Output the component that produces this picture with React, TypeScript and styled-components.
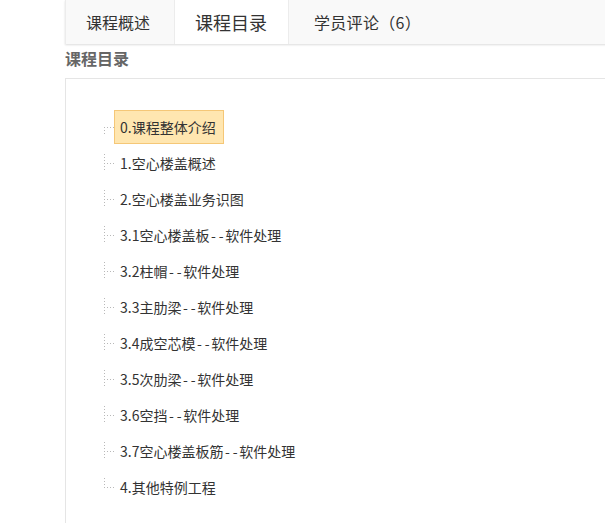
import styled, { createGlobalStyle } from 'styled-components'

const GlobalStyle = createGlobalStyle`
    html, body {
        margin: 0;
        padding: 0;
        background: #ffffff;
        font-family: "Microsoft YaHei", "Noto Sans CJK SC", "Noto Sans", sans-serif;
        color: #333333;
    }
`

const tabs = [
    { label: '课程概述', active: false },
    { label: '课程目录', active: true },
    { label: '学员评论（6）', active: false },
]

const lessons = [
    '0.课程整体介绍',
    '1.空心楼盖概述',
    '2.空心楼盖业务识图',
    '3.1空心楼盖板--软件处理',
    '3.2柱帽--软件处理',
    '3.3主肋梁--软件处理',
    '3.4成空芯模--软件处理',
    '3.5次肋梁--软件处理',
    '3.6空挡--软件处理',
    '3.7空心楼盖板筋--软件处理',
    '4.其他特例工程',
]

type LinePos = 'first' | 'center' | 'last'

// the "--" separators are drawn wider in the original font
const renderName = (name: string) => {
    const parts = name.split('--')
    if (parts.length < 2) return name
    return (
        <>
            {parts[0]}
            <Dashes>-</Dashes>
            <Dashes>-</Dashes>
            {parts[1]}
        </>
    )
}

const App = () => {
    return (
        <Page>
            <GlobalStyle />
            <TabBar>
                {tabs.map((tab) => (
                    <Tab key={tab.label} $active={tab.active}>{tab.label}</Tab>
                ))}
            </TabBar>
            <SectionTitle>课程目录</SectionTitle>
            <CatalogBox>
                <Tree>
                    {lessons.map((name, i) => {
                        const pos: LinePos = i === 0 ? 'first' : i === lessons.length - 1 ? 'last' : 'center'
                        return (
                            <TreeRow key={name}>
                                <Switch $pos={pos} />
                                <NodeLink $selected={i === 0}>{renderName(name)}</NodeLink>
                            </TreeRow>
                        )
                    })}
                </Tree>
            </CatalogBox>
        </Page>
    )
}

export default App

const Page = styled.div`
    padding-left: 65px;
    height: 523px;
    box-sizing: border-box;
    overflow: hidden;
`

const TabBar = styled.div`
    display: flex;
    height: 44px;
    width: 600px;
    background: #f9f9f9;
    border-left: 1px solid #ececec;
    box-shadow: 0 1px 2px rgba(0, 0, 0, 0.14);
    box-sizing: border-box;
`

const Tab = styled.div<{ $active: boolean }>`
    display: flex;
    align-items: center;
    height: 44px;
    padding: ${(p) => (p.$active ? '0 21px 0 20px' : '0 23px 0 19px')};
    font-size: ${(p) => (p.$active ? '18px' : '16px')};
    color: #333333;
    background: ${(p) => (p.$active ? '#ffffff' : 'transparent')};
    border-left: 1px solid ${(p) => (p.$active ? '#ececec' : 'transparent')};
    border-right: 1px solid ${(p) => (p.$active ? '#ececec' : 'transparent')};
    white-space: nowrap;
    &:last-child {
        padding-left: 24px;
        letter-spacing: 0.3px;
    }
`

const SectionTitle = styled.h3`
    margin: 0;
    height: 28px;
    line-height: 28px;
    font-size: 16px;
    font-weight: bold;
    color: #666666;
`

const CatalogBox = styled.div`
    margin-top: 6px;
    width: 600px;
    height: 500px;
    border: 1px solid #e5e5e5;
    padding: 30px 29px;
    box-sizing: border-box;
`

const Tree = styled.ul`
    list-style: none;
    margin: 0;
    padding: 0;
`

const TreeRow = styled.li`
    display: flex;
    align-items: center;
    height: 36px;
`

const dots = '#b8b8b8'

const Switch = styled.span<{ $pos: LinePos }>`
    position: relative;
    width: 19px;
    height: 18px;
    flex: none;
    &::before {
        content: '';
        position: absolute;
        left: 9px;
        width: 1px;
        top: ${(p) => (p.$pos === 'first' ? '9px' : '0')};
        bottom: ${(p) => (p.$pos === 'last' ? '9px' : '0')};
        background: repeating-linear-gradient(to bottom, ${dots} 0 1px, transparent 1px 3px);
    }
    &::after {
        content: '';
        position: absolute;
        left: 9px;
        top: 9px;
        width: 10px;
        height: 1px;
        background: repeating-linear-gradient(to right, ${dots} 0 1px, transparent 1px 3px);
    }
`

const NodeLink = styled.a<{ $selected: boolean }>`
    display: inline-flex;
    align-items: center;
    height: 34px;
    padding: 0 7px 0 5px;
    font-size: 14px;
    color: #333333;
    white-space: nowrap;
    box-sizing: border-box;
    background: ${(p) => (p.$selected ? '#ffe6b0' : 'transparent')};
    border: 1px solid ${(p) => (p.$selected ? '#f5c777' : 'transparent')};
`

const Dashes = styled.span`
    padding: 0 1.5px;
`
